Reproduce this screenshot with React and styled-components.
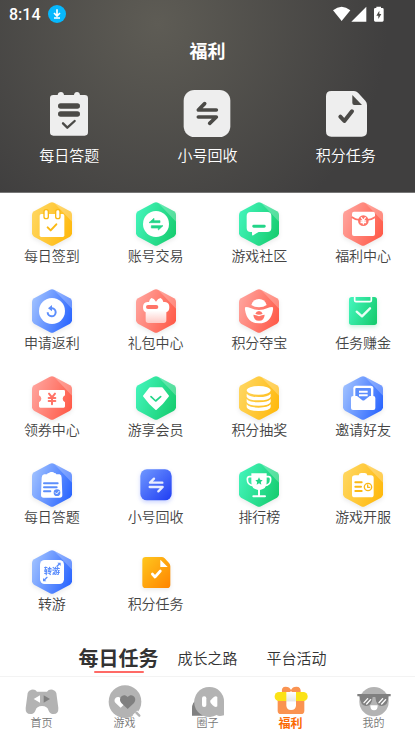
import React, { useState } from "react";
import styled, { createGlobalStyle } from "styled-components";

const GlobalStyle = createGlobalStyle`
  * {
    box-sizing: border-box;
  }
  body {
    margin: 0;
    background-color: #fff;
    color: #444;
    font-family: Roboto, "Noto Sans CJK SC", sans-serif;
    font-weight: 350;
  }
  a {
    color: inherit;
    text-decoration: none;
  }
  button {
    padding: 0;
    border: 0;
    background: none;
    color: inherit;
    font-family: inherit;
    cursor: pointer;
  }
  svg {
    display: block;
  }
`;

const colors = {
  yellow: ["#ffd65f", "#ffb90d", "#fbb914"],
  green: ["#41f3b8", "#17cd70", "#22d588"],
  red: ["#ffa29b", "#ff5b49", "#ff7468"],
  blue: ["#9dbfff", "#2b66ff", "#5c8efc"],
};

const line = { fill: "none", strokeLinecap: "round", strokeLinejoin: "round" };

const Gradients = () => (
  <Defs aria-hidden="true">
    <defs>
      {Object.keys(colors).map((name) => (
        <linearGradient key={name} id={name} x1="0" y1="0.3" x2="1" y2="0.7">
          <stop offset="0" stopColor={colors[name][0]} />
          <stop offset="1" stopColor={colors[name][1]} />
        </linearGradient>
      ))}
      <linearGradient id="indigo" x1="0" y1="0" x2="1" y2="1">
        <stop offset="0" stopColor="#7098ff" />
        <stop offset="1" stopColor="#1f3df3" />
      </linearGradient>
      <linearGradient id="orange" x1="0" y1="0" x2="1" y2="1">
        <stop offset="0" stopColor="#ffc71e" />
        <stop offset="1" stopColor="#ff8400" />
      </linearGradient>
      <linearGradient id="fade" x1="0" y1="0" x2="0" y2="1">
        <stop offset="0.5" stopColor="#fff" />
        <stop offset="1" stopColor="#ffc9c4" />
      </linearGradient>
      <linearGradient id="ribbon" x1="0" y1="0" x2="0" y2="1">
        <stop offset="0" stopColor="#fff" />
        <stop offset="0.5" stopColor="#e6e6e6" />
        <stop offset="0.55" stopColor="#fff" />
      </linearGradient>
    </defs>
  </Defs>
);

/* hexagon badge behind most of the shortcut icons */
const Hex = ({ color }) => (
  <>
    <path
      d="M60 2Q66 -1 72 2L120 28Q126 32 126 38V94Q126 100 120 104L72 130Q66 133 60 130L12 104Q6 100 6 94V38Q6 32 12 28Z"
      fill={`url(#${color})`}
    />
    <path d="M72 2L120 28Q126 32 126 38V59Z" fill="#fff" opacity="0.25" />
  </>
);

const Y = colors.yellow[2];
const G = colors.green[2];
const R = colors.red[2];
const B = colors.blue[2];

const SignIn = () => (
  <g>
    <rect x="29" y="36" width="74" height="69" rx="5" fill="#fff" />
    <rect x="42" y="23" width="13" height="27" rx="6" fill="#fff" stroke={Y} strokeWidth="4" />
    <rect x="77" y="23" width="13" height="27" rx="6" fill="#fff" stroke={Y} strokeWidth="4" />
    <path d="M53 76L62 85L79 67" stroke={Y} strokeWidth="6" {...line} />
  </g>
);

const Trade = () => (
  <g>
    <circle cx="66" cy="66" r="39" fill="#fff" />
    <path d="M45 62L60 49V56H78V62ZM87 71L73 84V78H52V71Z" fill={G} stroke={G} strokeWidth="2" strokeLinejoin="round" />
  </g>
);

const Chat = () => (
  <g>
    <path
      d="M41 30H91Q103 30 103 42V78Q103 90 91 90H65Q57 94 49 100Q45 102 45 97V90H41Q29 90 29 78V42Q29 30 41 30Z"
      fill="#fff"
    />
    <rect x="46" y="68" width="40" height="9" rx="4" fill={G} />
  </g>
);

const Envelope = () => (
  <g>
    <rect x="33" y="29" width="69" height="73" rx="6" fill="#fff" />
    <path d="M32 45Q42 53 56 54M103 45Q92 53 78 54" stroke={R} strokeWidth="5" fill="none" />
    <circle cx="67" cy="56" r="16" fill={R} />
    <path d="M61 47L67 55L73 47M67 55V66M60 57H74M60 62H74" stroke="#fff" strokeWidth="4" {...line} />
  </g>
);

const Rebate = () => (
  <g>
    <circle cx="66" cy="66" r="39" fill="#fff" />
    <path d="M62 58H66A12 12 0 1 1 53 70" stroke={B} strokeWidth="6" fill="none" />
    <path d="M54 58L66 48V67Z" fill={B} />
  </g>
);

const GiftBag = () => (
  <g>
    <path
      d="M45 39Q46 31 52 27Q60 28 66 38Q72 28 80 27Q87 31 88 39H93Q106 40 106 54Q106 67 97 70V94Q97 102 89 102H43Q35 102 35 94V70Q27 67 27 54Q27 40 40 39Z"
      fill="url(#fade)"
    />
    <rect x="36" y="48" width="37" height="12" rx="6" fill={R} />
  </g>
);

const Ingot = () => (
  <g>
    <path d="M43 48Q48 30 66 30Q84 30 89 48Q80 55 66 55Q52 55 43 48Z" fill="#fff" />
    <path d="M26 54Q34 54 40 57Q66 69 92 57Q98 54 106 54Q109 55 108 62Q102 103 66 103Q30 103 24 62Q23 55 26 54Z" fill="#fff" />
    <path d="M55 74Q58 66 66 66Q74 66 77 74Q66 80 55 74Z" fill={R} />
    <path d="M49 77Q54 77 57 79Q66 84 75 79Q78 77 83 77Q82 95 66 95Q50 95 49 77Z" fill={R} />
  </g>
);

const TaskBoard = () => (
  <g>
    <rect x="24" y="24" width="84" height="84" rx="8" fill="url(#green)" />
    <path d="M41 24V34Q41 38 45 38H87Q91 38 91 34V24" stroke="#fff" strokeWidth="5" fill="none" />
    <path d="M47 68L63 82L87 58" stroke="#eafff5" strokeWidth="7" {...line} />
  </g>
);

const Coupon = () => (
  <g>
    <path
      d="M31 42H101Q105 42 105 46V58Q98 62 98 68Q98 74 105 79V91Q105 95 101 95H31Q27 95 27 91V79Q34 74 34 68Q34 62 27 58V46Q27 42 31 42Z"
      fill="#fff"
    />
    <path d="M57 53L66 64L75 53M66 64V85M56 66H76M56 75H76" stroke={R} strokeWidth="6" {...line} />
  </g>
);

const Diamond = () => (
  <g>
    <path d="M48 37H84L102 60Q85 84 66 99Q47 84 30 60Z" fill="#fff" stroke="#fff" strokeWidth="6" strokeLinejoin="round" />
    <path d="M51 62L65 75L80 62" stroke={G} strokeWidth="5" {...line} />
  </g>
);

const Coins = () => (
  <g fill="#fff">
    <ellipse cx="65" cy="43" rx="36" ry="13" />
    {[0, 16, 32].map((y) => (
      <path
        key={y}
        transform={`translate(0 ${y})`}
        d="M29 53Q37 63 65 63Q93 63 101 53V62Q98 73 65 73Q32 73 29 62Z"
      />
    ))}
  </g>
);

const Invite = () => (
  <g>
    <rect x="37" y="29" width="60" height="50" rx="8" fill="#fff" />
    <rect x="43" y="36" width="47" height="30" rx="3" fill={B} />
    <rect x="30" y="60" width="73" height="42" rx="6" fill="#fff" />
    <path d="M47 59H87L71 72Q67 75 63 72Z" fill={B} />
    <path d="M54 47H80M54 58H80" stroke="#fff" strokeWidth="6" fill="none" />
  </g>
);

const Quiz = () => (
  <g>
    <path
      d="M42 34H51Q52 30 57 30Q60 26 65 27Q70 26 73 30Q78 30 79 34H89Q95 37 95 44L97 96Q97 104 89 104H41Q33 104 33 96L35 44Q35 37 42 34Z"
      fill="#fff"
    />
    <path d="M42 61H83M42 73H80M42 85H61" stroke={B} strokeWidth="6" {...line} />
    <circle cx="81" cy="89" r="10" fill={B} />
    <path d="M76 89L80 93L87 85" stroke="#fff" strokeWidth="3" {...line} />
  </g>
);

const Recycle = () => (
  <g>
    <rect x="19" y="19" width="94" height="93" rx="20" fill="url(#indigo)" />
    <path d="M60 47L48 59H85M47 72H86L73 85" stroke="#e8edff" strokeWidth="7" {...line} />
  </g>
);

const Trophy = () => (
  <g>
    <path d="M45 41H37Q31 41 31 49Q31 67 49 68M87 41H95Q101 41 101 49Q101 67 83 68" stroke="#fff" strokeWidth="5" fill="none" />
    <path d="M43 31H89V58Q89 78 69 81V97H84Q87 97 87 100Q87 103 84 103H49Q46 103 46 100Q46 97 49 97H63V81Q43 78 43 58Z" fill="#fff" />
    <path d="M66 43L69.5 50.5L77 51.5L71.500 57L73 65L66 61L59 65L60.500 57L55 51.500L62.500 50.500Z" fill={G} />
  </g>
);

const Server = () => (
  <g>
    <path
      d="M42 37H53Q54 30 61 30H71Q78 30 79 37H90Q98 37 98 45V95Q98 103 90 103H41Q33 103 33 95V45Q33 37 42 37Z"
      fill="#fff"
    />
    <path d="M43 58H62M43 71H60M43 84H62" stroke={Y} strokeWidth="6" {...line} />
    <circle cx="81" cy="72" r="11" fill="none" stroke={Y} strokeWidth="4" />
    <path d="M80 66V73H86" stroke={Y} strokeWidth="4" {...line} />
  </g>
);

const Transfer = () => (
  <g>
    <rect x="30" y="30" width="72" height="72" rx="14" fill="#fff" />
    <text x="66" y="73" textAnchor="middle" fontSize="24" fontWeight="900" fill={B}>
      转游
    </text>
    <path d="M81 49L88 42M51 82L43 90" stroke={B} strokeWidth="4" {...line} />
    <path d="M82 38H92V48ZM39 84V94H49Z" fill={B} />
  </g>
);

const Points = () => (
  <g>
    <path d="M35 21H83Q88 21 92 25L105 39Q109 43 109 49V104Q109 114 99 114H35Q25 114 25 104V31Q25 21 35 21Z" fill="url(#orange)" />
    <path d="M79 29L101 51H79Z" fill="#fff" />
    <path d="M55 72L63 81L79 63" stroke="#fff" strokeWidth="8" {...line} />
  </g>
);

const shortcuts = [
  { label: "每日签到", hex: "yellow", Icon: SignIn },
  { label: "账号交易", hex: "green", Icon: Trade },
  { label: "游戏社区", hex: "green", Icon: Chat },
  { label: "福利中心", hex: "red", Icon: Envelope },
  { label: "申请返利", hex: "blue", Icon: Rebate },
  { label: "礼包中心", hex: "red", Icon: GiftBag },
  { label: "积分夺宝", hex: "red", Icon: Ingot },
  { label: "任务赚金", shadow: "#17cd7040", Icon: TaskBoard },
  { label: "领券中心", hex: "red", Icon: Coupon },
  { label: "游享会员", hex: "green", Icon: Diamond },
  { label: "积分抽奖", hex: "yellow", Icon: Coins },
  { label: "邀请好友", hex: "blue", Icon: Invite },
  { label: "每日答题", hex: "blue", Icon: Quiz },
  { label: "小号回收", shadow: "#2b4fff40", Icon: Recycle },
  { label: "排行榜", hex: "green", Icon: Trophy },
  { label: "游戏开服", hex: "yellow", Icon: Server },
  { label: "转游", hex: "blue", Icon: Transfer },
  { label: "积分任务", Icon: Points },
];

const ink = "#4b4a47";

const HeroQuiz = () => (
  <g>
    <path d="M25 15H38Q39 6 48 6Q56 6 57 15H87Q88 6 96 6Q104 6 105 15H119Q129 15 129 25V127Q129 137 119 137H25Q15 137 15 127V25Q15 15 25 15Z" fill="#eee" />
    <path d="M47 48H97M47 72H97" stroke={ink} strokeWidth="16" {...line} />
    <path d="M54 100L67 113L89 93" stroke={ink} strokeWidth="7" {...line} />
  </g>
);

const HeroRecycle = () => (
  <g>
    <rect x="2" y="0" width="140" height="141" rx="32" fill="#eee" />
    <path d="M65 41L46 60H100M46 81H100L80 100" stroke={ink} strokeWidth="11" {...line} />
  </g>
);

const HeroPoints = () => (
  <g>
    <path d="M28 3H96Q103 3 108 8L130 32Q135 37 135 45V124Q135 140 119 140H28Q12 140 12 124V19Q12 3 28 3Z" fill="#eee" />
    <path d="M91 15L120 45H97Q91 45 91 39Z" fill={ink} />
    <path d="M55 80L67 93L90 64" stroke={ink} strokeWidth="12" {...line} />
  </g>
);

const heroLinks = [
  { label: "每日答题", Icon: HeroQuiz },
  { label: "小号回收", Icon: HeroRecycle },
  { label: "积分任务", Icon: HeroPoints },
];

const heart = "M25 42L6 24C-6 10 12 -8 25 6C38 -8 56 10 44 24Z";

const NavHome = () => (
  <g>
    <path
      d="M22 17Q34 15 39 23H69Q74 15 86 17Q95 19 97 27L103 72Q104 90 89 90Q78 90 74 80Q70 66 54 66Q38 66 34 80Q30 90 19 90Q4 90 5 72L11 27Q13 19 22 17Z"
      fill="#b3b3b3"
    />
    <path d="M48 34V56L29 45Z" fill="#fff" />
    <path d="M59 34V56L78 45Z" fill="#808080" />
  </g>
);

const NavGame = () => (
  <g>
    <circle cx="54" cy="53" r="49" fill="#b3b3b3" />
    <path d="M78 95L92 81" stroke="#fff" strokeWidth="4" />
    <path d="M88 86L97 95" stroke="#b3b3b3" strokeWidth="7" strokeLinecap="round" />
    <path d={heart} transform="translate(21 38) scale(0.8)" fill="#fff" />
    <path d={heart} transform="translate(37 33)" fill="#808080" />
  </g>
);

const NavCircle = () => (
  <g>
    <path d="M24 44Q5 54 6 74V95H36Q60 94 62 72Z" fill="#808080" />
    <path d="M59 9A43 43 0 0 1 102 52V94Q86 98 80 93A45 45 0 1 1 59 9Z" fill="#b3b3b3" />
    <rect x="36" y="37" width="13" height="32" rx="6" fill="#fff" />
    <path d="M82 39V67Q76 72 68 64L62 57Q59 53 62 49L68 42Q76 34 82 39Z" fill="#fff" />
  </g>
);

const NavGift = () => (
  <g>
    <path d="M54 22Q40 32 27 25Q24 8 38 8Q50 8 54 18Q58 8 70 8Q85 8 83 25Q68 32 54 22Z" fill="#fa9351" />
    <path d="M14 46H94V80Q94 90 84 90H24Q14 90 14 80Z" fill="#fa9351" />
    <rect x="5" y="24" width="99" height="27" rx="13" fill="#fbe216" />
    <path d="M40 24H69V64Q69 78 54 78Q40 78 40 64Z" fill="url(#ribbon)" />
  </g>
);

const NavMine = () => (
  <g>
    <circle cx="54" cy="53" r="44" fill="#b3b3b3" />
    <path d="M4 30H104V37H98Q96 66 78 66Q60 66 58 39H50Q48 66 30 66Q14 66 10 37H4Z" fill="#808080" />
    <path d="M24 56L35 44M32 60L44 47M69 56L80 44M77 60L89 47" stroke="#fff" strokeWidth="4" {...line} />
    <path d="M43 64H65Q66 79 54 79Q42 79 43 64Z" fill="#fff" />
  </g>
);

const navItems = [
  { label: "首页", Icon: NavHome },
  { label: "游戏", Icon: NavGame },
  { label: "圈子", Icon: NavCircle },
  { label: "福利", Icon: NavGift, active: true },
  { label: "我的", Icon: NavMine },
];

const tabs = ["每日任务", "成长之路", "平台活动"];

const App = () => {
  const [tab, setTab] = useState(tabs[0]);

  return (
    <Page>
      <GlobalStyle />
      <Gradients />
      <Header>
        <StatusBar>
          <Time>8:14</Time>
          <svg width="18" height="18" viewBox="0 0 54 54">
            <circle cx="27" cy="27" r="27" fill="#06b8fd" />
            <path d="M27 13V32M18 24L27 33L36 24M18 39H36" stroke="#fff" strokeWidth="5" fill="none" />
          </svg>
          <Signals viewBox="0 0 153 48">
            <path d="M0 13Q26 -9 52 13L26 45Z" fill="#fff" />
            <path d="M100 2V47H55Z" fill="#fff" />
            <path d="M130 2H144V6H148Q152 6 152 10V43Q152 47 148 47H127Q123 47 123 43V10Q123 6 127 6H130Z" fill="#fff" />
            <path d="M139 14L130 29H136V39L145 24H139Z" fill={ink} />
          </Signals>
        </StatusBar>
        <Title>福利</Title>
        <HeroRow>
          {heroLinks.map(({ label, Icon }) => (
            <HeroLink href="#" key={label}>
              <svg width="48" height="48" viewBox="0 0 144 144">
                <Icon />
              </svg>
              {label}
            </HeroLink>
          ))}
        </HeroRow>
      </Header>

      <ShortcutGrid>
        {shortcuts.map(({ label, hex, shadow, Icon }) => (
          <Shortcut href="#" key={label}>
            <ShortcutIcon viewBox="0 0 132 132" $shadow={shadow}>
              {hex && <Hex color={hex} />}
              <Icon />
            </ShortcutIcon>
            {label}
          </Shortcut>
        ))}
      </ShortcutGrid>

      <Tabs>
        {tabs.map((name) => (
          <Tab key={name} $active={name === tab} onClick={() => setTab(name)}>
            {name}
          </Tab>
        ))}
      </Tabs>

      <BottomNav>
        {navItems.map(({ label, Icon, active }) => (
          <NavLink href="#" key={label} $active={active}>
            <svg width="36" height="33" viewBox="0 3 108 99">
              <Icon />
            </svg>
            {label}
          </NavLink>
        ))}
      </BottomNav>
    </Page>
  );
};

const Page = styled.div`
  display: flex;
  flex-direction: column;
  min-height: 100vh;
`;

const Defs = styled.svg`
  position: absolute;
  width: 0;
  height: 0;
`;

const Header = styled.header`
  padding-bottom: 26px;
  border-bottom: 1px solid #777;
  background: radial-gradient(circle at 38% 24px, #5e5c55, #403f3f 230px);
  color: #fff;
`;

const StatusBar = styled.div`
  display: flex;
  align-items: center;
  gap: 7px;
  height: 28px;
  padding: 0 31px 0 9px;
`;

const Time = styled.span`
  font-size: 16px;
  font-weight: 500;
`;

const Signals = styled.svg`
  width: 51px;
  height: 16px;
  margin-left: auto;
`;

const Title = styled.h1`
  margin: 0;
  font-size: 18px;
  font-weight: 700;
  line-height: 48px;
  text-align: center;
`;

const HeroRow = styled.nav`
  display: grid;
  grid-template-columns: repeat(3, 1fr);
  padding-top: 14px;
`;

const HeroLink = styled.a`
  display: flex;
  flex-direction: column;
  align-items: center;
  gap: 8px;
  font-size: 15px;
  line-height: 20px;
`;

const ShortcutGrid = styled.nav`
  display: grid;
  grid-template-columns: repeat(4, 1fr);
  grid-auto-rows: 87px;
  padding-top: 9px;
`;

const Shortcut = styled.a`
  display: flex;
  flex-direction: column;
  align-items: center;
  font-size: 14px;
  line-height: 20px;
`;

const ShortcutIcon = styled.svg`
  width: 44px;
  height: 44px;
  overflow: visible;
  filter: drop-shadow(0 2px 2px ${(props) => props.$shadow || "#00000014"});
`;

const Tabs = styled.div`
  display: grid;
  grid-template-columns: repeat(3, 89px);
  justify-content: center;
  height: 36px;
`;

const Tab = styled.button`
  display: flex;
  flex-direction: column;
  align-items: center;
  justify-content: flex-end;
  color: #333;
  font-size: ${(props) => (props.$active ? "20px" : "15px")};
  font-weight: ${(props) => (props.$active ? 700 : 350)};
  line-height: 24px;
  white-space: nowrap;

  &::after {
    content: "";
    width: 50px;
    height: 2px;
    border-radius: 1px;
    background-color: ${(props) => (props.$active ? "#ff6a66" : "transparent")};
  }
`;

const BottomNav = styled.nav`
  display: grid;
  grid-template-columns: repeat(5, 1fr);
  margin-top: auto;
  padding: 8px 0;
  border-top: 1px solid #f3f3f3;
  background-color: #fff;
`;

const NavLink = styled.a`
  display: flex;
  flex-direction: column;
  align-items: center;
  color: ${(props) => (props.$active ? "#fb6a04" : "#777")};
  font-size: ${(props) => (props.$active ? "12px" : "11px")};
  font-weight: ${(props) => (props.$active ? 700 : 350)};
  line-height: 12px;
`;

export default App;
